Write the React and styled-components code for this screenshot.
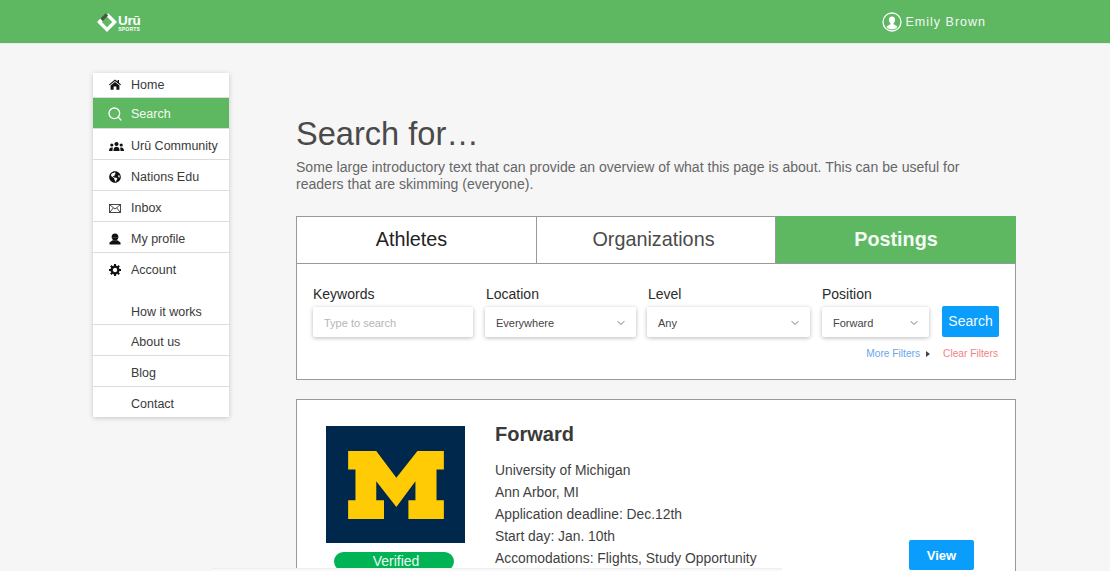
import React from 'react'
import styled, { createGlobalStyle } from 'styled-components'
import { FaGlobeAmericas } from 'react-icons/fa'
import { FiSearch, FiChevronDown } from 'react-icons/fi'

const Global = createGlobalStyle`
  html, body { margin: 0; padding: 0; height: 100%; overflow: hidden; }
  body { background: #f6f6f6; font-family: "Liberation Sans", Arial, sans-serif; color: #333; }
`

const Header = styled.header`
  height: 43px;
  background: #5eb862;
  border-bottom: 1px solid #e9ebe9;
  display: flex;
  align-items: center;
  justify-content: space-between;
  padding: 0 124px 0 97px;
`
const Logo = styled.div`
  display: flex;
  align-items: center;
  gap: 1px;
  color: #fff;
`
const LogoText = styled.div`
  display: flex;
  flex-direction: column;
  align-items: center;
  font-weight: 700;
  font-size: 13.5px;
  letter-spacing: -0.3px;
  line-height: 13px;
  margin-top: 3px;
`
const LogoSmall = styled.span`
  font-size: 5px;
  line-height: 5px;
  letter-spacing: 0.2px;
`
const User = styled.div`
  display: flex;
  align-items: center;
  gap: 4px;
  color: #f2f8f2;
  font-size: 12.5px;
  letter-spacing: 1px;
`
const Layout = styled.div`
  display: flex;
  align-items: flex-start;
  padding: 29px 0 0 93px;
  gap: 67px;
`
const Sidebar = styled.nav`
  width: 136px;
  flex: none;
  background: #fff;
  box-shadow: 0 1px 5px rgba(0, 0, 0, 0.2);
`
const NavItem = styled.div`
  display: flex;
  align-items: center;
  box-sizing: border-box;
  height: ${p => p.$h || 31}px;
  padding-top: ${p => p.$pt ?? 4}px;
  padding-bottom: ${p => p.$pb || 0}px;
  background: ${p => (p.$active ? '#5eb862' : 'transparent')};
  color: ${p => (p.$active ? '#f4faf4' : '#3a3a3a')};
  border-bottom: 1px solid ${p => (p.$plain ? 'transparent' : '#dcdcdc')};
  font-size: 12.5px;
`
const NavIcon = styled.span`
  width: 38px;
  padding-left: 16px;
  box-sizing: border-box;
  flex: none;
  display: flex;
  align-items: center;
  color: #111;
`
const SearchGlyph = styled(FiSearch)`
  margin-left: -2px;
  color: #fff;
`
const Main = styled.main`
  width: 720px;
  flex: none;
  padding-top: 43px;
`
const Title = styled.h1`
  margin: 0;
  font-size: 32.6px;
  line-height: 36px;
  font-weight: 400;
  color: #4a4a4a;
`
const Intro = styled.p`
  margin: 7px 0 0;
  font-size: 14.05px;
  line-height: 16.5px;
  color: #666;
  width: 680px;
`
const Tabs = styled.div`
  margin-top: 24px;
  display: grid;
  grid-template-columns: 240px 239px 1fr;
  height: 48px;
  border: 1px solid #999;
  box-sizing: border-box;
  background: #fff;
`
const Tab = styled.div`
  display: flex;
  align-items: center;
  justify-content: center;
  padding: 0 ${p => p.$shift}px ${p => (p.$active ? 0 : 2)}px 0;
  font-size: 19.8px;
  font-weight: ${p => (p.$active ? 700 : 400)};
  background: ${p => (p.$active ? '#5eb862' : 'transparent')};
  color: ${p => (p.$active ? '#f4faf4' : p.$dim ? '#4a4a4a' : '#222')};
  border-right: ${p => (p.$active ? 'none' : '1px solid #999')};
  margin: ${p => (p.$active ? '-1px -1px 0 0' : '0')};
`
const FilterPanel = styled.section`
  height: 116px;
  box-sizing: border-box;
  background: #fff;
  border: 1px solid #999;
  border-top: none;
  padding: 22px 16px 0 16px;
`
const FilterRow = styled.div`
  display: flex;
  align-items: flex-end;
`
const Field = styled.div`
  width: ${p => p.$w}px;
  margin-right: ${p => p.$mr}px;
  flex: none;
`
const Label = styled.div`
  font-size: 14px;
  line-height: 16px;
  color: #2b2b2b;
  margin-bottom: 5px;
  padding-left: ${p => p.$pl || 0}px;
`
const Control = styled.div`
  height: 30px;
  box-sizing: border-box;
  background: #fff;
  border-radius: 2px;
  box-shadow: 0 1px 4px rgba(0, 0, 0, 0.28);
  display: flex;
  align-items: center;
  justify-content: space-between;
  padding: 2px 9px 0 11px;
  font-size: 11px;
  color: ${p => (p.$placeholder ? '#b5b5b5' : '#444')};
`
const SearchButton = styled.button`
  width: 58px;
  height: 31px;
  border: none;
  border-radius: 2px;
  background: #0a9dfb;
  color: #f3faff;
  font-family: inherit;
  font-size: 14px;
  padding: 0 0 2px;
`
const FilterLinks = styled.div`
  display: flex;
  justify-content: flex-end;
  align-items: center;
  margin-top: 11px;
  padding-right: 1px;
  font-size: 10.2px;
  line-height: 12px;
`
const MoreLink = styled.span`
  color: #6aa5ee;
`
const Caret = styled.span`
  width: 0;
  height: 0;
  margin: 0 13px 0 6px;
  border-left: 4px solid #444;
  border-top: 3px solid transparent;
  border-bottom: 3px solid transparent;
`
const ClearLink = styled.span`
  color: #ee8484;
`
const ResultCard = styled.article`
  margin-top: 19px;
  height: 300px;
  box-sizing: border-box;
  background: #fff;
  border: 1px solid #999;
  padding: 26px 0 0 29px;
  display: flex;
`
const ImageColumn = styled.div`
  width: 140px;
  flex: none;
  display: flex;
  flex-direction: column;
`
const OrgLogo = styled.div`
  width: 139px;
  height: 117px;
  background: #00274c;
  display: flex;
  align-items: center;
  justify-content: center;
`
const Badge = styled.div`
  margin: 9px 0 0 8px;
  width: 120px;
  height: 19px;
  padding-left: 4px;
  box-sizing: border-box;
  border-radius: 10px;
  background: #00b355;
  color: #eafaf0;
  font-size: 14px;
  line-height: 19px;
  text-align: center;
`
const Info = styled.div`
  margin-left: 29px;
  width: 400px;
  flex: none;
`
const JobTitle = styled.h2`
  margin: 0 0 17px;
  font-size: 20px;
  line-height: 16px;
  font-weight: 700;
  color: #3a3a3a;
`
const InfoLine = styled.div`
  font-size: 13.85px;
  line-height: 22px;
  color: #3f3f3f;
`
const ViewButton = styled.button`
  align-self: flex-start;
  margin: 114px 0 0 14px;
  width: 65px;
  height: 30px;
  border: none;
  border-radius: 2px;
  background: #0a9dfb;
  color: #fff;
  font-family: inherit;
  font-weight: 700;
  font-size: 13px;
`
const BottomFade = styled.div`
  position: fixed;
  left: 212px;
  bottom: 0;
  width: 570px;
  height: 3px;
  box-sizing: border-box;
  border-top: 1px solid #eeeeee;
  background: #f8f8f8;
`

const LogoMark = () => (
  <svg width="20" height="20" viewBox="0 0 20 20" fill="none" strokeWidth="3.4">
    <path d="M10 2.4 L17.6 10 L10 17.6 L2.4 10 L4.6 7.8" stroke="#fff" />
    <path d="M4.6 7.8 L10 2.4" stroke="#46564a" />
  </svg>
)

const UserIcon = () => (
  <svg width="20" height="20" viewBox="0 0 20 20">
    <circle cx="10" cy="10" r="9" fill="none" stroke="#fff" strokeWidth="1.3" />
    <path d="M10 4.4 C12.2 4.4 13.3 6 13.1 8 C13 9.5 12.2 10.7 11.6 11.3 C11.5 12.3 12 12.7 13.4 13.3 C14.6 13.8 15.3 14.3 15.6 14.9 C14.3 16.4 12.3 17.3 10 17.3 C7.7 17.3 5.7 16.4 4.4 14.9 C4.7 14.3 5.4 13.8 6.6 13.3 C8 12.7 8.5 12.3 8.4 11.3 C7.8 10.7 7 9.5 6.9 8 C6.7 6 7.8 4.4 10 4.4 Z" fill="#fff" />
  </svg>
)

const HomeIcon = () => (
  <svg width="12" height="11" viewBox="0 0 12 11" fill="#111">
    <path d="M6 0.4 L8.6 2.6 V1 H10 V3.8 L12 5.6 L11.3 6.3 L6 1.9 L0.7 6.3 L0 5.6 Z" />
    <path d="M6 2.9 L10.4 6.5 V10.8 H7.4 V7.6 H4.6 V10.8 H1.6 V6.5 Z" />
  </svg>
)

const CommunityIcon = () => (
  <svg width="15" height="10" viewBox="0 0 15 10" fill="#111">
    <circle cx="7.5" cy="3" r="2.1" />
    <path d="M4.4 10 C4.4 7.2 5.6 5.8 7.5 5.8 C9.4 5.8 10.6 7.2 10.6 10 Z" />
    <circle cx="2.8" cy="4" r="1.6" />
    <path d="M0 10 C0 7.6 1 6.4 2.8 6.4 C3.3 6.4 3.6 6.5 3.9 6.7 C3.6 7.6 3.5 8.8 3.5 10 Z" />
    <circle cx="12.2" cy="4" r="1.6" />
    <path d="M15 10 C15 7.6 14 6.4 12.2 6.4 C11.7 6.4 11.4 6.5 11.1 6.7 C11.4 7.6 11.5 8.8 11.5 10 Z" />
  </svg>
)

const MailIcon = () => (
  <svg width="12" height="9" viewBox="0 0 12 9" fill="none" stroke="#333" strokeWidth="0.9">
    <rect x="0.5" y="0.5" width="11" height="8" />
    <path d="M0.8 0.8 L6 5 L11.2 0.8 M0.8 8.3 L4.4 3.8 M11.2 8.3 L7.6 3.8" />
  </svg>
)

const ProfileIcon = () => (
  <svg width="12" height="12" viewBox="0 0 12 12" fill="#111">
    <path d="M6 0.4 C8.2 0.4 9.4 2 9.4 4 C9.4 6 8 7.4 6 7.4 C4 7.4 2.6 6 2.6 4 C2.6 2 3.8 0.4 6 0.4 Z" />
    <path d="M3.2 4.6 H8.8 V5 H3.2 Z" fill="#777" />
    <path d="M3.6 7.2 L8.4 7.2 L11.5 9.4 L11.5 11.5 L0.5 11.5 L0.5 9.4 Z" />
  </svg>
)

const GearIcon = () => (
  <svg width="12" height="12" viewBox="0 0 12 12">
    <circle cx="6" cy="6" r="3.4" fill="none" stroke="#111" strokeWidth="2.4" />
    <path
      d="M6 0 V12 M0 6 H12 M1.8 1.8 L10.2 10.2 M10.2 1.8 L1.8 10.2"
      stroke="#111"
      strokeWidth="2"
      strokeDasharray="2.2 7.6"
    />
  </svg>
)

const MichiganM = () => (
  <svg width="96" height="68" viewBox="0 0 95.3 67.7">
    <path
      d="M0 0 H28 L48 26.7 L69 0 H95.3 V18.3 H88 V49 H95.3 V67.7 H60 V49 H67 V30 L48 55.7 L28 30 V49 H35.7 V67.7 H0 V49 H7.3 V18.3 H0 Z"
      fill="#ffcb05"
    />
  </svg>
)

const topItems = [
  { label: 'Home', icon: <HomeIcon />, h: 25, pt: 0, pb: 1 },
  { label: 'Search', icon: <SearchGlyph size={16} />, active: true, pt: 2 },
  { label: 'Urū Community', icon: <CommunityIcon /> },
  { label: 'Nations Edu', icon: <FaGlobeAmericas size={12} /> },
  { label: 'Inbox', icon: <MailIcon /> },
  { label: 'My profile', icon: <ProfileIcon /> },
]
const bottomItems = [
  { label: 'How it works', pt: 5 },
  { label: 'About us' },
  { label: 'Blog' },
  { label: 'Contact', h: 30, plain: true },
]
const details = [
  'University of Michigan',
  'Ann Arbor, MI',
  'Application deadline: Dec.12th',
  'Start day: Jan. 10th',
  'Accomodations: Flights, Study Opportunity',
]

export default function App() {
  return (
    <>
      <Global />
      <Header>
        <Logo>
          <LogoMark />
          <LogoText>
            Urū
            <LogoSmall>SPORTS</LogoSmall>
          </LogoText>
        </Logo>
        <User>
          <UserIcon />
          Emily Brown
        </User>
      </Header>
      <Layout>
        <Sidebar>
          {topItems.map(item => (
            <NavItem key={item.label} $active={item.active} $h={item.h} $pt={item.pt} $pb={item.pb}>
              <NavIcon>{item.icon}</NavIcon>
              {item.label}
            </NavItem>
          ))}
          <NavItem $h={41} $pt={4} $pb={10} $plain>
            <NavIcon><GearIcon /></NavIcon>
            Account
          </NavItem>
          {bottomItems.map(item => (
            <NavItem key={item.label} $plain={item.plain} $pt={item.pt} $h={item.h}>
              <NavIcon />
              {item.label}
            </NavItem>
          ))}
        </Sidebar>
        <Main>
          <Title>Search for…</Title>
          <Intro>
            Some large introductory text that can provide an overview of what this page is about. This can be useful for readers that are skimming (everyone).
          </Intro>
          <Tabs>
            <Tab $shift={10}>Athletes</Tab>
            <Tab $dim $shift={5}>Organizations</Tab>
            <Tab $active $shift={0}>Postings</Tab>
          </Tabs>
          <FilterPanel>
            <FilterRow>
              <Field $w={160} $mr={12}>
                <Label>Keywords</Label>
                <Control $placeholder>Type to search</Control>
              </Field>
              <Field $w={151} $mr={11}>
                <Label $pl={1}>Location</Label>
                <Control>Everywhere<FiChevronDown size={12} color="#777" /></Control>
              </Field>
              <Field $w={163} $mr={12}>
                <Label $pl={1}>Level</Label>
                <Control>Any<FiChevronDown size={12} color="#777" /></Control>
              </Field>
              <Field $w={107} $mr={13}>
                <Label>Position</Label>
                <Control>Forward<FiChevronDown size={12} color="#777" /></Control>
              </Field>
              <SearchButton>Search</SearchButton>
            </FilterRow>
            <FilterLinks>
              <MoreLink>More Filters</MoreLink>
              <Caret />
              <ClearLink>Clear Filters</ClearLink>
            </FilterLinks>
          </FilterPanel>
          <ResultCard>
            <ImageColumn>
              <OrgLogo><MichiganM /></OrgLogo>
              <Badge>Verified</Badge>
            </ImageColumn>
            <Info>
              <JobTitle>Forward</JobTitle>
              {details.map(line => <InfoLine key={line}>{line}</InfoLine>)}
            </Info>
            <ViewButton>View</ViewButton>
          </ResultCard>
        </Main>
      </Layout>
      <BottomFade />
    </>
  )
}
